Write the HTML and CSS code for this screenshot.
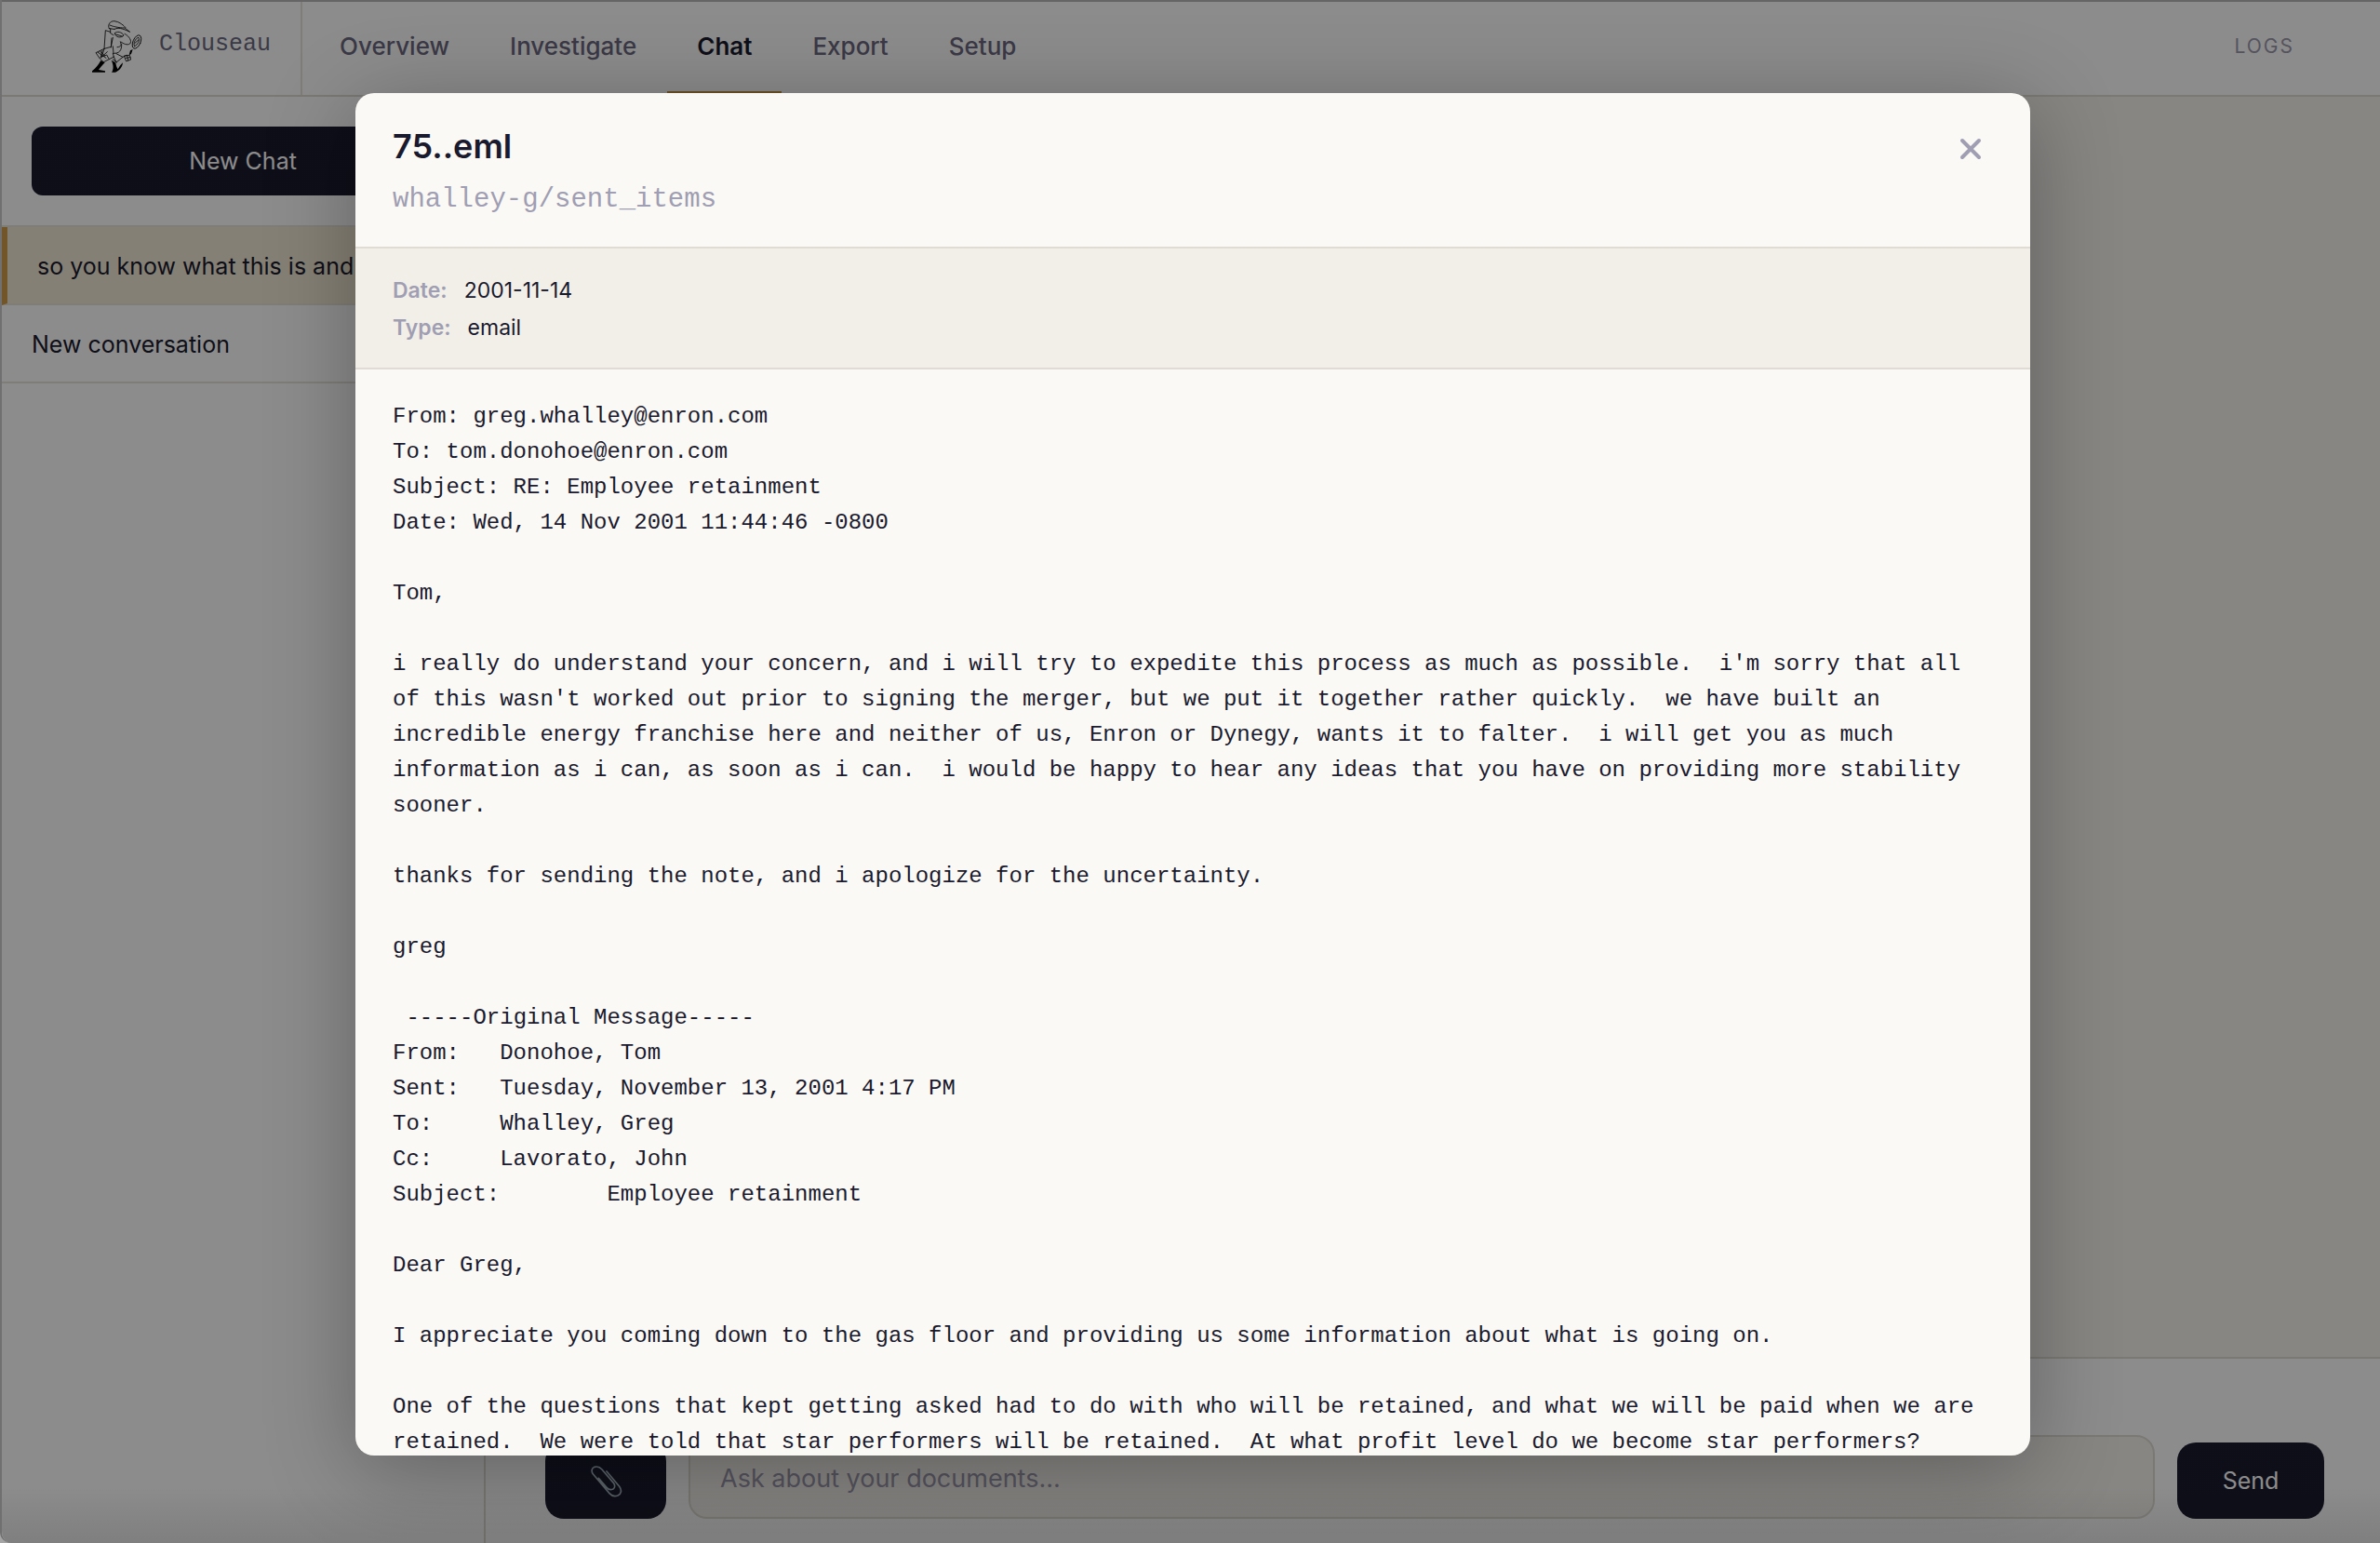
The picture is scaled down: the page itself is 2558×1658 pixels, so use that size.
FILE: index.html
```html
<!DOCTYPE html>
<html lang="en">
<head>
    <meta charset="UTF-8">
    <meta name="viewport" content="width=device-width, initial-scale=1.0">
    <title>Clouseau</title>
    <link rel="stylesheet" href="styles.css">
</head>
<body>
    <div class="app">
        <header class="topbar">
            <a class="brand" href="#">
                <svg class="brand-logo" viewBox="22 15 165 180" aria-hidden="true">
                    <g fill="none" stroke="#111" stroke-width="2.6" stroke-linejoin="round" stroke-linecap="round">
                        <!-- hat -->
                        <path d="M80 47 C74 36 82 22 97 23 C113 25 126 36 133 44 M82 36 C90 40 112 45 128 45 M80 47 L97 49 M97 49 C110 43 122 46 147 58 L130 45"/>
                        <!-- collar and face -->
                        <path d="M84 58 L68 53 L64 112 L86 106 L92 76 M84 48 L84 62 L94 68 M88 78 L86 108 M92 104 L94 127"/>
                        <path d="M98 62 C104 54 122 58 127 69 C118 79 100 76 98 62 M102 66 L122 72 M130 64 C146 72 154 88 147 96 C138 102 126 96 118 90"/>
                        <path d="M116 90 C121 100 119 106 106 107 M120 98 C121 118 112 128 94 127"/>
                        <!-- coat -->
                        <path d="M64 112 L37 125 L50 144 L62 155 L80 146 L72 132 L56 138 L64 112 M44 124 L70 142 M50 120 L66 135 M58 118 L52 142 L74 122"/>
                        <path d="M80 146 L95 138 L92 127 M95 138 L103 156 L124 139 L103 128 M92 146 L104 156 M124 139 L136 133"/>
                        <path d="M129 135 L146 133 L150 147 L136 152 Z M134 142 L148 140 M138 133 L141 150"/>
                        <!-- magnifying glass -->
                        <ellipse cx="169" cy="90" rx="12" ry="23" transform="rotate(24 169 90)"/>
                        <path d="M162 104 C156 96 164 78 175 76 C180 84 172 100 162 104 M163 94 L174 84"/>
                    </g>
                    <path d="M144 133 L148 118 L156 114 L151 129 Z"/>
                    <path d="M53 150 L66 157 C58 165 51 174 46 180 L67 184 V188 H25 V184 C36 176 46 163 53 150 Z"/>
                    <path d="M87 149 L101 157 C102 167 105 174 108 178 C113 169 118 162 124 157 C123 172 112 184 100 188 H88 C94 180 95 165 87 149 Z"/>
                </svg>
                <span class="brand-name">Clouseau</span>
            </a>
            <nav class="nav">
                <a href="#">Overview</a>
                <a href="#">Investigate</a>
                <a class="active" href="#">Chat</a>
                <a href="#">Export</a>
                <a href="#">Setup</a>
            </nav>
            <a class="logs" href="#">LOGS</a>
        </header>

        <div class="layout">
            <aside class="sidebar">
                <div class="sidebar-top">
                    <button class="btn new-chat" type="button">New Chat</button>
                </div>
                <ul class="chats">
                    <li><a class="active" href="#">so you know what this is and</a></li>
                    <li><a href="#">New conversation</a></li>
                </ul>
            </aside>

            <main class="main">
                <div class="messages"></div>
                <form class="composer">
                    <button class="btn attach" type="button" aria-label="Attach a file">
                        <svg viewBox="159 106 108 108" aria-hidden="true">
                            <path d="M216 130 L257 179 C266 191 263 203 252 208 C242 212 232 209 225 201 L173 140 C165 130 168 119 177 116 C187 113 195 117 201 124 L238 167 C244 175 243 184 237 187 C230 190 222 189 216 182 L190 152"/>
                        </svg>
                    </button>
                    <textarea class="question" rows="1" placeholder="Ask about your documents..." aria-label="Question"></textarea>
                    <button class="btn send" type="submit">Send</button>
                </form>
            </main>
        </div>

        <div class="overlay">
            <section class="modal" role="dialog" aria-modal="true" aria-labelledby="doc-title">
                <div class="modal-header">
                    <div>
                        <h2 id="doc-title">75..eml</h2>
                        <p class="path">whalley-g/sent_items</p>
                    </div>
                    <button class="close" type="button" aria-label="Close">
                        <svg viewBox="0 0 24 24" aria-hidden="true"><path d="M3 3 L21 21 M21 3 L3 21"/></svg>
                    </button>
                </div>
                <dl class="meta">
                    <div><dt>Date:</dt><dd>2001-11-14</dd></div>
                    <div><dt>Type:</dt><dd>email</dd></div>
                </dl>
                <pre class="content">From: greg.whalley@enron.com
To: tom.donohoe@enron.com
Subject: RE: Employee retainment
Date: Wed, 14 Nov 2001 11:44:46 -0800

Tom,

i really do understand your concern, and i will try to expedite this process as much as possible.  i'm sorry that all of this wasn't worked out prior to signing the merger, but we put it together rather quickly.  we have built an incredible energy franchise here and neither of us, Enron or Dynegy, wants it to falter.  i will get you as much information as i can, as soon as i can.  i would be happy to hear any ideas that you have on providing more stability sooner.

thanks for sending the note, and i apologize for the uncertainty.

greg

 -----Original Message-----
From:   Donohoe, Tom
Sent:   Tuesday, November 13, 2001 4:17 PM
To:     Whalley, Greg
Cc:     Lavorato, John
Subject:        Employee retainment

Dear Greg,

I appreciate you coming down to the gas floor and providing us some information about what is going on.

One of the questions that kept getting asked had to do with who will be retained, and what we will be paid when we are retained.  We were told that star performers will be retained.  At what profit level do we become star performers?</pre>
            </section>
        </div>
    </div>
</body>
</html>
```

FILE: styles.css
```css
* {
    box-sizing: border-box;
}

body {
    margin: 0;
    background: #a5a5a5;
    color: #1a1a2e;
    font-family: Inter, "Liberation Sans", sans-serif;
    font-size: 25px;
    line-height: 38px;
}

a {
    color: inherit;
    text-decoration: none;
}

.app {
    position: relative;
    display: flex;
    flex-direction: column;
    height: 100vh;
    overflow: hidden;
    border-left: 2px solid #707070;
    border-bottom-left-radius: 12px;
    background: #fff;
}

/* Top bar */
.topbar {
    display: flex;
    align-items: stretch;
    height: 104px;
    border-top: 2px solid #b8b8b8;
    border-bottom: 2px solid #e0dcd3;
    background: #fff;
}

.brand {
    display: flex;
    align-items: center;
    gap: 18px;
    padding: 0 32px 4px 96px;
    border-right: 2px solid #e8e4da;
    color: #6b6880;
}

.brand-logo {
    width: 55px;
    height: 60px;
}

.brand-name {
    padding-bottom: 4px;
    font-family: "Liberation Mono", monospace;
    font-size: 25px;
}

.nav {
    display: flex;
    gap: 1px;
    padding-left: 8px;
    font-size: 26px;
    font-weight: 500;
    color: #6b6880;
}

.nav a {
    display: flex;
    align-items: center;
    padding: 0 32px;
    border-bottom: 4px solid transparent;
}

.nav .active {
    border-bottom-color: #c49344;
    color: #1a1a2e;
    font-weight: 600;
}

.logs {
    display: flex;
    align-items: center;
    margin-left: auto;
    padding: 0 92px 4px 0;
    color: #9a98ac;
    font-size: 21px;
    letter-spacing: 2px;
}

/* Sidebar */
.layout {
    display: flex;
    flex: 1;
    min-height: 0;
}

.sidebar {
    width: 520px;
    border-right: 2px solid #e0dcd3;
}

.sidebar-top {
    padding: 32px;
    border-bottom: 2px solid #e8e4da;
}

.btn {
    display: flex;
    align-items: center;
    justify-content: center;
    padding: 0;
    border: 0;
    border-radius: 20px;
    background: #1a1a2e;
    color: #fff;
    font: inherit;
}

.new-chat {
    width: 100%;
    height: 74px;
    border-radius: 12px;
}

.chats {
    margin: 0;
    padding: 0;
    list-style: none;
}

.chats a {
    display: block;
    padding: 23px 32px 21px;
    border-bottom: 2px solid #e8e4da;
    white-space: nowrap;
}

.chats .active {
    border-left: 6px solid #d09a4a;
    background: #f2e9d5;
}

/* Conversation */
.main {
    display: flex;
    flex: 1;
    flex-direction: column;
}

.messages {
    flex: 1;
    background: #f7f4ef;
}

.composer {
    display: flex;
    align-items: flex-end;
    gap: 24px;
    padding: 82px 60px 26px 64px;
    border-top: 2px solid #e0dcd3;
}

.attach {
    width: 130px;
    height: 82px;
}

.attach svg {
    width: 36px;
    height: 36px;
    fill: none;
    stroke: #a5b4c0;
    stroke-width: 5;
    stroke-linecap: round;
}

.question {
    flex: 1;
    height: 90px;
    padding: 26px 32px 22px;
    border: 2px solid #e0dcd3;
    border-radius: 20px;
    background: #f7f4ef;
    font: inherit;
    font-size: 27px;
    resize: none;
}

.question::placeholder {
    color: #9a98ac;
}

.send {
    width: 158px;
    height: 82px;
}

/* Document viewer */
.overlay {
    position: absolute;
    inset: 0;
    display: flex;
    justify-content: center;
    padding: 100px 0 94px 4px;
    background: linear-gradient(to top, rgba(0, 0, 0, .5), rgba(0, 0, 0, .45) 60px);
}

.modal {
    display: flex;
    flex-direction: column;
    width: 1800px;
    max-width: 90%;
    overflow: hidden;
    border-radius: 20px;
    background: #faf9f5;
    box-shadow: 0 16px 96px rgba(0, 0, 0, .3);
}

.modal-header {
    display: flex;
    align-items: flex-start;
    justify-content: space-between;
    padding: 33px 40px 30px;
    border-bottom: 2px solid #e0dcd3;
}

.modal-header h2 {
    margin: 0 0 14px;
    font-size: 36px;
    font-weight: 600;
    line-height: 48px;
}

.path {
    margin: 0;
    color: #a09eb2;
    font-family: "Liberation Mono", monospace;
    font-size: 29px;
    line-height: 40px;
}

.close {
    width: 48px;
    height: 56px;
    padding: 0;
    border: 0;
    background: none;
}

.close svg {
    width: 24px;
    height: 24px;
    stroke: #a09eb2;
    stroke-width: 4;
    stroke-linecap: round;
}

.meta {
    margin: 0;
    padding: 25px 40px 23px;
    border-bottom: 2px solid #e0dcd3;
    background: #f2efe9;
    font-size: 23px;
    line-height: 40px;
}

.meta div {
    display: flex;
    gap: 18px;
}

.meta dt {
    color: #a09eb2;
    font-weight: 600;
}

.meta dd {
    margin: 0;
}

.content {
    flex: 1;
    min-height: 0;
    margin: 0;
    padding: 32px 40px 0;
    overflow: hidden;
    font-family: "Liberation Mono", monospace;
    font-size: 24px;
    line-height: 38px;
    white-space: pre-wrap;
}
```
